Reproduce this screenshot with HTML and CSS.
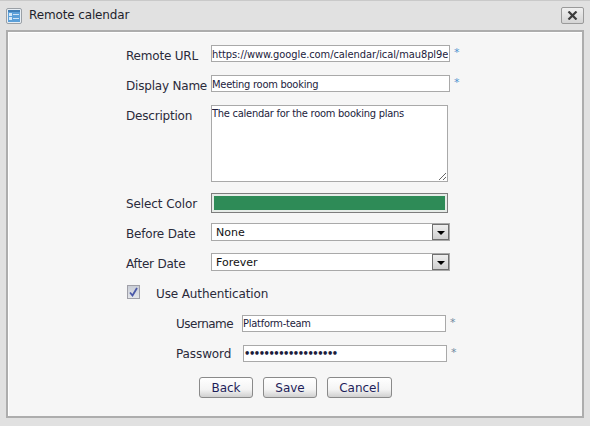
FILE: index.html
```html
<!DOCTYPE html>
<html lang="en">
<head>
    <meta charset="UTF-8">
    <meta name="viewport" content="width=device-width, initial-scale=1.0">
    <title>Remote calendar</title>
    <link rel="stylesheet" href="styles.css">
</head>
<body>
    <div class="dialog">
        <div class="titlebar">
            <svg class="title-icon" width="16" height="16" viewBox="0 0 16 16">
                <rect x="0.5" y="0.5" width="15" height="15" rx="1.5" fill="#e8eef4" stroke="#9aa0a6"/>
                <rect x="2" y="2" width="12" height="12" fill="#5b9fd8"/>
                <rect x="2" y="2" width="12" height="2" fill="#3f7fb8"/>
                <rect x="3" y="5" width="3" height="3" fill="#d5e8f7"/>
                <rect x="3" y="9" width="3" height="3" fill="#d5e8f7"/>
                <rect x="7" y="6" width="6" height="1" fill="#cfe4f5"/>
                <rect x="7" y="10" width="6" height="1" fill="#cfe4f5"/>
            </svg>
            <span class="title-text">Remote calendar</span>
            <button class="close-btn" type="button">
                <svg width="11" height="9" viewBox="0 0 11 9">
                    <path d="M1.5 0.5 L9.5 8.5 M9.5 0.5 L1.5 8.5" stroke="#3c3c3c" stroke-width="2.2" fill="none"/>
                </svg>
            </button>
        </div>
        <div class="panel">
            <form class="form">
                <div class="row row-url">
                    <label class="label">Remote URL</label>
                    <input class="text-input url-input" type="text" value="https://www.google.com/calendar/ical/mau8pl9e">
                    <span class="req">*</span>
                </div>
                <div class="row row-name">
                    <label class="label">Display Name</label>
                    <input class="text-input" type="text" value="Meeting room booking">
                    <span class="req">*</span>
                </div>
                <div class="row row-desc">
                    <label class="label label-top">Description</label>
                    <textarea class="text-area">The calendar for the room booking plans</textarea>
                </div>
                <div class="row row-color">
                    <label class="label">Select Color</label>
                    <div class="color-box"><div class="color-fill"></div></div>
                </div>
                <div class="row row-before">
                    <label class="label">Before Date</label>
                    <div class="combo">
                        <span class="combo-text">None</span>
                        <span class="combo-btn"><span class="arrow"></span></span>
                    </div>
                </div>
                <div class="row row-after">
                    <label class="label">After Date</label>
                    <div class="combo">
                        <span class="combo-text">Forever</span>
                        <span class="combo-btn"><span class="arrow"></span></span>
                    </div>
                </div>
                <div class="row row-auth">
                    <span class="check">
                        <svg width="9" height="10" viewBox="0 0 9 10">
                            <path d="M1 5.5 L3.5 8.5 L8 1" stroke="#4a58a8" stroke-width="1.8" fill="none"/>
                        </svg>
                    </span>
                    <label class="auth-label">Use Authentication</label>
                </div>
                <div class="row row-user">
                    <label class="label-sub">Username</label>
                    <input class="text-input user-input" type="text" value="Platform-team">
                    <span class="req req-grey">*</span>
                </div>
                <div class="row row-pass">
                    <label class="label-sub">Password</label>
                    <input class="text-input user-input pass-input" type="password" value="1234567890123456789">
                    <span class="req req-grey">*</span>
                </div>
                <div class="buttons">
                    <button class="btn btn-back" type="button">Back</button>
                    <button class="btn btn-save" type="button">Save</button>
                    <button class="btn btn-cancel" type="button">Cancel</button>
                </div>
            </form>
        </div>
    </div>
</body>
</html>
```

FILE: styles.css
```css
* {
    box-sizing: border-box;
    margin: 0;
    padding: 0;
}

html, body {
    width: 590px;
    height: 426px;
    overflow: hidden;
}

body {
    font-family: "DejaVu Sans", sans-serif;
    font-size: 12px;
    color: #2a2a3a;
    background-color: #e1e1e1;
}

.dialog {
    height: 426px;
    border-top: 1px solid #c9c9c9;
    padding: 0 6px;
}

.titlebar {
    display: flex;
    align-items: center;
    height: 29px;
}

.title-icon {
    flex: none;
}

.title-text {
    margin-left: 7px;
    margin-top: -2px;
    letter-spacing: -0.13px;
    color: #1f1f2c;
}

.close-btn {
    display: flex;
    align-items: center;
    justify-content: center;
    width: 23px;
    height: 17px;
    margin-left: auto;
    background: linear-gradient(#f0f0f0, #d4d4d4);
    border: 1px solid #9a9a9a;
    border-radius: 2px;
}

.panel {
    height: 388px;
    background-color: #f6f6f6;
    border: 2px solid #adadad;
    box-shadow: inset 1px 1px 0 #ffffff;
}

.form {
    padding-top: 13px;
}

.row {
    display: flex;
    align-items: center;
    padding-left: 118px;
}

.row-url,
.row-name {
    height: 17px;
    margin-bottom: 13px;
}

.row-desc {
    align-items: flex-start;
    height: 77px;
    margin-bottom: 11px;
}

.row-color {
    height: 20px;
    margin-bottom: 10px;
}

.row-before,
.row-after {
    height: 18px;
    margin-bottom: 12px;
}

.row-after {
    margin-bottom: 14px;
}

.row-auth {
    height: 14px;
    margin-bottom: 16px;
    padding-left: 119px;
}

.row-user,
.row-pass {
    height: 17px;
    margin-bottom: 13px;
    padding-left: 168px;
}

.label {
    flex: none;
    width: 85px;
    padding-top: 4px;
    letter-spacing: -0.2px;
    white-space: nowrap;
}

.label-top {
    padding-top: 4px;
}

.row-color .label {
    padding-top: 2px;
    letter-spacing: -0.1px;
}

.label-sub {
    flex: none;
    width: 66px;
    letter-spacing: -0.1px;
}

.row-user .label-sub {
    letter-spacing: -0.5px;
}

.row-pass .label-sub {
    width: 67px;
}

.text-input,
.text-area {
    font-family: "DejaVu Sans Condensed", "DejaVu Sans", sans-serif;
    font-size: 11px;
    letter-spacing: -0.25px;
    color: #1c1c3c;
    background-color: #fff;
    border: 1px solid #a9a9a9;
    outline: none;
}

.text-input {
    width: 239px;
    height: 17px;
    padding: 0 1px 0 0;
}

.row-url .text-input,
.row-name .text-input {
    padding-top: 2px;
}

.url-input {
    letter-spacing: -0.07px;
}

.user-input {
    width: 204px;
}

.pass-input {
    font-weight: bold;
    letter-spacing: -1.45px;
}

.text-area {
    display: block;
    width: 237px;
    height: 77px;
    padding: 1px 0;
    resize: both;
}

.req {
    margin-left: 4px;
    margin-top: -2px;
    font-size: 11px;
    color: #4f94cf;
}

.req-grey {
    color: #6f8aa0;
}

.color-box {
    width: 237px;
    height: 20px;
    padding: 2px;
    background-color: #e6ece8;
    border: 1px solid #7d7d7d;
}

.color-fill {
    height: 100%;
    background-color: #2e8b57;
}

.combo {
    display: flex;
    align-items: center;
    width: 239px;
    height: 18px;
    background-color: #fff;
    border: 1px solid #a9a9a9;
}

.combo-text {
    flex: 1;
    padding-left: 4px;
    font-size: 11px;
    color: #111;
}

.combo-btn {
    display: flex;
    align-items: center;
    justify-content: center;
    flex: none;
    width: 17px;
    height: 16px;
    background: linear-gradient(#eeeeee, #cfcfcf);
    border: 1px solid #6f6f6f;
}

.arrow {
    display: block;
    margin-top: 2px;
    border-left: 4px solid transparent;
    border-right: 4px solid transparent;
    border-top: 4px solid #000;
}

.check {
    display: flex;
    align-items: center;
    justify-content: center;
    flex: none;
    width: 13px;
    height: 14px;
    background: linear-gradient(#c9cdd6, #e4e6ea);
    border: 1px solid #a0a0a8;
}

.auth-label {
    margin-left: 16px;
    padding-top: 4px;
    letter-spacing: -0.12px;
}

.buttons {
    display: flex;
    gap: 10px;
    padding-left: 191px;
    padding-top: 2px;
}

.btn {
    width: 54px;
    height: 21px;
    font-family: "DejaVu Sans", sans-serif;
    font-size: 12px;
    color: #1e1e5a;
    background: linear-gradient(#ffffff, #f4f4f4 60%, #d0d0d0);
    border: 1px solid #8a8a8a;
    border-radius: 3px;
}

.btn-cancel {
    width: 65px;
}
```
